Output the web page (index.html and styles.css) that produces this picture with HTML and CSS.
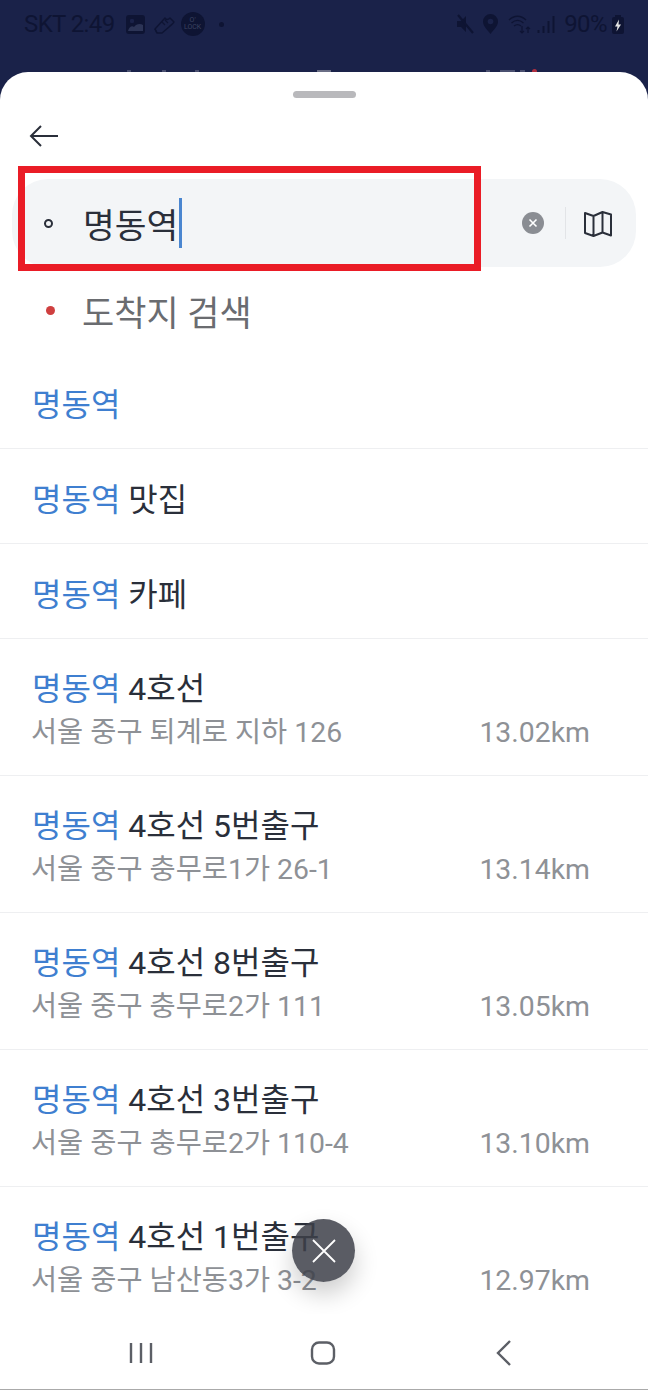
FILE: index.html
```html
<!DOCTYPE html>
<html lang="ko">
<head>
    <meta charset="UTF-8">
    <title>명동역 검색</title>
    <link rel="stylesheet" href="styles.css">
</head>
<body>
    <div class="status-bar">
        <div class="status-left">
            <span class="status-text">SKT 2:49</span>
            <svg class="photo-icon" width="19" height="19" viewBox="0 0 19 19"><rect width="19" height="19" rx="3" fill="#0e1433"/><rect x="2" y="2" width="15" height="15" rx="1" fill="#0e1433"/><circle cx="6" cy="6" r="2.200" fill="#1a2249"/><path d="M2 16c1-4 4-6 6-4 2-3 6-4 9-2v6z" fill="#2c3456"/></svg>
            <svg class="shoe-icon" width="21" height="19" viewBox="0 0 21 19"><path d="M1 14L11 3c1 2 3 2 5 0l4 4c-1 2-3 3-5 5l-7 6H3z" fill="none" stroke="#0e1433" stroke-width="1.500" stroke-linejoin="round"/><path d="M3 18l-2-4M8 7l3 3M11 5l3 3" stroke="#0e1433" stroke-width="1.200"/></svg>
            <span class="clock-badge">O'<br>LOCK</span>
            <span class="status-dot"></span>
        </div>
        <div class="status-right">
            <svg class="mute-icon" width="18" height="20" viewBox="0 0 18 20"><path d="M1 7h4l5-5v16l-5-5H1z" fill="#0e1433"/><path d="M2 1l15 18" stroke="#0e1433" stroke-width="2.200"/></svg>
            <svg class="pin-icon" width="15" height="20" viewBox="0 0 15 20"><path d="M7.500 0a7.500 7.500 0 0 1 7.500 7.500c0 4.500-4 8-7.500 12.500C4 15.500 0 12 0 7.500A7.500 7.500 0 0 1 7.500 0z" fill="#0e1433"/><circle cx="7.500" cy="7.500" r="2.800" fill="#1a2249"/></svg>
            <svg class="wifi-icon" width="24" height="20" viewBox="0 0 24 20"><path d="M1 6c5-5 12-5 17 0M3.500 9c4-3.500 8-3.500 12 0M6 12c2.500-2 4.500-2 7 0" fill="none" stroke="#0e1433" stroke-width="1.300"/><path d="M14 12v7M12 17l2 2 2-2M20 19v-6M18 15l2-2 2 2" fill="none" stroke="#0e1433" stroke-width="1.200"/></svg>
            <svg class="signal-icon" width="18" height="18" viewBox="0 0 18 18"><path d="M1.500 15v3M6.500 11v7M11.500 6v12M16.500 1v17" stroke="#0e1433" stroke-width="2"/></svg>
            <span class="status-text">90%</span>
            <svg class="battery-icon" width="12" height="19" viewBox="0 0 12 19"><rect x="0" y="2" width="12" height="17" rx="2" fill="#0e1433"/><rect x="3" y="0" width="6" height="2" fill="#0e1433"/><path d="M7 4.500L3 11.500h2.500L4.500 16.500 9 9.500H6.500z" fill="#e4e4e4"/></svg>
        </div>
        <div class="peek">
            <span class="peek-mark peek-a"></span>
            <span class="peek-mark peek-b"></span>
            <span class="peek-mark peek-c"></span>
            <span class="peek-mark peek-d"></span>
            <span class="peek-mark peek-e"></span>
            <span class="peek-mark peek-f"></span>
            <span class="peek-mark peek-g"></span>
            <span class="peek-mark peek-h"></span>
        </div>
    </div>

    <div class="sheet">
        <div class="handle"></div>
        <div class="back-row">
            <svg width="30" height="24" viewBox="0 0 30 24"><path d="M29 12H2M12 2L2 12l10 10" fill="none" stroke="#2a2f3a" stroke-width="2"/></svg>
        </div>

        <div class="search-box">
            <span class="origin-dot"></span>
            <span class="search-value">명동역</span><span class="caret"></span>
            <span class="search-actions">
                <svg width="22" height="22" viewBox="0 0 22 22"><circle cx="11" cy="11" r="11" fill="#8a8d93"/><path d="M7.500 7.500l7 7M14.500 7.500l-7 7" stroke="#fff" stroke-width="1.600"/></svg>
                <span class="divider"></span>
                <svg width="30" height="30" viewBox="0 0 30 30"><path d="M2 5l8.500 3 9-4L28 6.500v21l-8.500-3-9 3.500L2 25zM10.500 8v19.500M19.500 4v20.500" fill="none" stroke="#2a2f3a" stroke-width="2" stroke-linejoin="round"/></svg>
            </span>
            <span class="highlight-box"></span>
        </div>

        <div class="dest-row">
            <span class="dest-dot"></span>
            <span class="dest-label">도착지 검색</span>
        </div>

        <ul class="results">
            <li class="result"><div class="result-title"><b>명동역</b></div></li>
            <li class="result"><div class="result-title"><b>명동역</b> 맛집</div></li>
            <li class="result"><div class="result-title"><b>명동역</b> 카페</div></li>
            <li class="result result-place">
                <div class="result-title"><b>명동역</b> 4호선</div>
                <div class="result-sub"><span>서울 중구 퇴계로 지하 126</span><span>13.02km</span></div>
            </li>
            <li class="result result-place">
                <div class="result-title"><b>명동역</b> 4호선 5번출구</div>
                <div class="result-sub"><span>서울 중구 충무로1가 26-1</span><span>13.14km</span></div>
            </li>
            <li class="result result-place">
                <div class="result-title"><b>명동역</b> 4호선 8번출구</div>
                <div class="result-sub"><span>서울 중구 충무로2가 111</span><span>13.05km</span></div>
            </li>
            <li class="result result-place">
                <div class="result-title"><b>명동역</b> 4호선 3번출구</div>
                <div class="result-sub"><span>서울 중구 충무로2가 110-4</span><span>13.10km</span></div>
            </li>
            <li class="result result-place">
                <div class="result-title"><b>명동역</b> 4호선 1번출구</div>
                <div class="result-sub"><span>서울 중구 남산동3가 3-2</span><span>12.97km</span></div>
            </li>
        </ul>

        <button class="close-fab">
            <svg width="24" height="24" viewBox="0 0 24 24"><path d="M1 1l22 22M23 1L1 23" stroke="#fff" stroke-width="1.800"/></svg>
        </button>

        <div class="nav-bar">
            <svg width="26" height="24" viewBox="0 0 26 24"><path d="M3 2v20M13 2v20M23 2v20" stroke="#5c5f66" stroke-width="2.400"/></svg>
            <svg width="26" height="24" viewBox="0 0 26 24"><rect x="2" y="1.500" width="22" height="21" rx="7" fill="none" stroke="#5c5f66" stroke-width="2.400"/></svg>
            <svg width="26" height="26" viewBox="0 0 26 26"><path d="M19 1L7 13l12 12" fill="none" stroke="#5c5f66" stroke-width="2.400"/></svg>
        </div>
    </div>
</body>
</html>
```

FILE: styles.css
```css
* {
    box-sizing: border-box;
}
html, body {
    margin: 0;
    padding: 0;
}
body {
    width: 648px;
    height: 1390px;
    overflow: hidden;
    background-color: #1a2249;
    font-family: Roboto, "Noto Sans CJK KR", sans-serif;
    color: #2a2f3a;
}
.status-bar {
    position: relative;
    height: 72px;
    padding: 8px 24px 0 24px;
    display: flex;
    justify-content: space-between;
    align-items: flex-start;
}
.status-left, .status-right {
    height: 32px;
    display: flex;
    align-items: center;
}
.status-text {
    font-size: 24px;
    letter-spacing: -0.6px;
    color: #0e1433;
}
.photo-icon {
    margin-left: 11px;
}
.shoe-icon {
    margin-left: 9px;
}
.clock-badge {
    width: 24px;
    height: 24px;
    margin-left: 6px;
    border-radius: 50%;
    background-color: #0e1433;
    color: #3c4360;
    font-size: 7px;
    line-height: 7px;
    text-align: center;
    padding-top: 5px;
}
.status-dot {
    width: 5px;
    height: 5px;
    margin-left: 14px;
    border-radius: 50%;
    background-color: #0e1433;
}
.pin-icon {
    margin-left: 9px;
}
.wifi-icon {
    margin-left: 10px;
}
.signal-icon {
    margin-left: 5px;
}
.status-right .status-text {
    margin-left: 9px;
}
.battery-icon {
    margin-left: 5px;
}
.peek {
    position: absolute;
    left: 0;
    bottom: 0;
    height: 3px;
    display: flex;
    align-items: flex-end;
}
.peek-mark {
    height: 2px;
    background-color: #4a5070;
}
.peek-a {
    width: 4px;
    margin-left: 127px;
}
.peek-b {
    width: 4px;
    margin-left: 31px;
}
.peek-c {
    width: 4px;
    margin-left: 29px;
}
.peek-d {
    width: 14px;
    margin-left: 118px;
    background-color: #6a6e85;
}
.peek-e {
    width: 4px;
    margin-left: 155px;
}
.peek-f {
    width: 15px;
    margin-left: 10px;
}
.peek-g {
    width: 5px;
    margin-left: 5px;
}
.peek-h {
    width: 5px;
    height: 3px;
    margin-left: 7px;
    border-radius: 3px 3px 0 0;
    background-color: #b03040;
}
.sheet {
    position: relative;
    height: 1318px;
    background-color: #fff;
    border-radius: 28px 28px 0 0;
    overflow: hidden;
    padding-top: 19px;
}
.handle {
    width: 63px;
    height: 7px;
    margin: 0 auto;
    border-radius: 4px;
    background-color: #b9b9bc;
}
.back-row {
    height: 81px;
    padding: 26px 0 0 29px;
}
.search-box {
    position: relative;
    height: 88px;
    margin: 0 12px;
    padding: 0 0 0 32px;
    display: flex;
    align-items: center;
    border-radius: 36px;
    background-color: #f3f5f7;
}
.origin-dot {
    width: 9px;
    height: 9px;
    border: 2px solid #2a2f3a;
    border-radius: 50%;
    margin-right: 30px;
}
.search-value {
    font-size: 34.5px;
    color: #2a2f3a;
}
.caret {
    width: 3px;
    height: 50px;
    margin-left: 1px;
    background-color: #4a86d0;
}
.search-actions {
    margin-left: auto;
    padding-right: 23px;
    display: flex;
    align-items: center;
}
.divider {
    width: 1px;
    height: 32px;
    margin: 0 17px 0 21px;
    background-color: #e2e4e7;
}
.highlight-box {
    position: absolute;
    left: 6px;
    top: -13px;
    width: 463px;
    height: 105px;
    border: 7px solid #ea1c26;
}
.dest-row {
    height: 87px;
    padding-left: 46px;
    display: flex;
    align-items: center;
}
.dest-dot {
    width: 9px;
    height: 9px;
    margin-right: 27px;
    border-radius: 50%;
    background-color: #cf3f3f;
}
.dest-label {
    font-size: 35px;
    color: #6a6c70;
}
.results {
    list-style: none;
    margin: 0;
    padding: 0;
}
.result {
    height: 95px;
    padding: 7px 58px 0 32px;
    display: flex;
    flex-direction: column;
    justify-content: center;
    border-bottom: 1px solid #eeeff1;
}
.result-title {
    font-size: 32px;
    line-height: 44px;
    color: #2a2f3a;
}
.result-title b {
    font-weight: 400;
    color: #3f7fd0;
}
.result-sub {
    display: flex;
    justify-content: space-between;
    margin-top: 3px;
    margin-left: -1px;
    font-size: 28.4px;
    line-height: 38px;
    color: #8e9196;
}
.result-place {
    height: 137px;
    padding-top: 5px;
}
.close-fab {
    position: absolute;
    left: 292px;
    top: 1147px;
    width: 63px;
    height: 63px;
    padding: 0;
    border: none;
    border-radius: 50%;
    background-color: rgba(61, 64, 73, 0.85);
    box-shadow: 0 12px 24px rgba(0, 0, 0, 0.2);
    display: flex;
    align-items: center;
    justify-content: center;
}
.nav-bar {
    position: absolute;
    left: 0;
    right: 0;
    bottom: 0;
    height: 76px;
    padding: 2px 131px 0 128px;
    display: flex;
    justify-content: space-between;
    align-items: center;
    background-color: #fff;
    border-bottom: 1px solid #aaa;
}
```
